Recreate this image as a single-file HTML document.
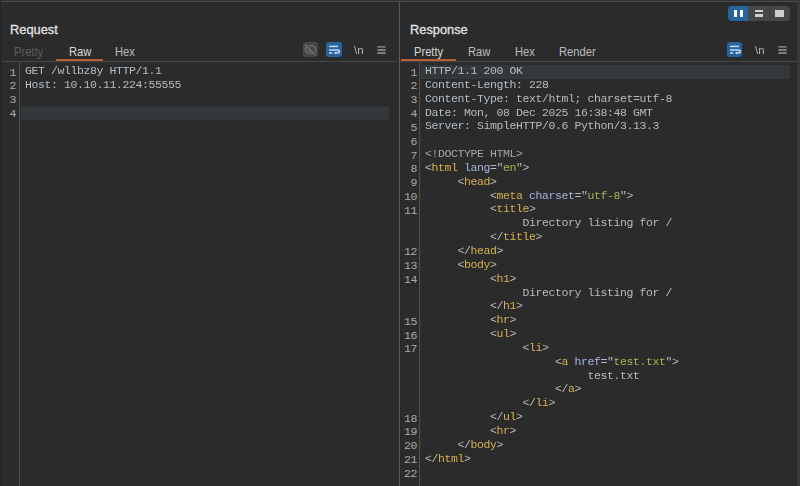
<!DOCTYPE html>
<html><head><meta charset="utf-8">
<style>
*{margin:0;padding:0;box-sizing:border-box}
html,body{width:800px;height:486px;overflow:hidden;background:#2b2b2b}
body{position:relative;font-family:"Liberation Sans",sans-serif}
.a{position:absolute}
.title{font-size:13.5px;color:#e2e2e2;-webkit-text-stroke:0.3px #e2e2e2;top:20.7px;line-height:18px;transform:scaleX(0.95);transform-origin:0 0}
.tab{font-size:12px;color:#bcbcbc;top:44px;line-height:16px;transform:scaleX(0.93);transform-origin:0 0}
.ul{height:2px;background:#b85c34;top:59px}
.code{will-change:transform;font-family:"Liberation Mono",monospace;font-size:11.5px;letter-spacing:-0.401px;color:#b2bec7;white-space:pre;line-height:13.84px}
.ln{font-family:"Liberation Mono",monospace;font-size:11.5px;letter-spacing:-0.401px;color:#a8a8a8;white-space:pre;line-height:13.84px;text-align:right}
.w{color:#bdb9b4}.t{color:#d6b050}.b{color:#bababa}.n{color:#a6b4e2}.v{color:#a0b650}.d{color:#9fa8a0}
</style></head><body>
<!-- top strip -->
<div class="a" style="left:0;top:0;width:800px;height:1px;background:#323438"></div>
<div class="a" style="left:0;top:1px;width:800px;height:1px;background:#4a4a4a"></div>
<div class="a" style="left:0;top:0;width:1px;height:486px;background:#20242e"></div>
<div class="a" style="left:1px;top:2px;width:1px;height:484px;background:#272a30"></div>
<!-- divider -->
<div class="a" style="left:398px;top:2px;width:1px;height:484px;background:#313131"></div>
<div class="a" style="left:399px;top:1px;width:1px;height:485px;background:#595959"></div>
<div class="a" style="left:400px;top:2px;width:1px;height:484px;background:#292929"></div>
<div class="a" style="left:797px;top:2px;width:1px;height:484px;background:#333436"></div>
<div class="a" style="left:798px;top:1px;width:1px;height:485px;background:#3d3e40"></div>
<div class="a" style="left:799px;top:0;width:1px;height:486px;background:#37383a"></div>

<!-- REQUEST -->
<div class="a title" style="left:10px">Request</div>
<div class="a tab" style="left:14px;color:#5c5c5c">Pretty</div>
<div class="a tab" style="left:69px;color:#d8d8d8">Raw</div>
<div class="a tab" style="left:115px">Hex</div>
<div class="a ul" style="left:56px;width:47px"></div>
<div class="a" style="left:2px;top:61px;width:395px;height:1px;background:#474747"></div>
<div class="a" style="left:19px;top:62px;width:1px;height:424px;background:#4e4e4e"></div><div class="a" style="left:20px;top:62px;width:1px;height:424px;background:#303030"></div>
<div class="a" style="left:21px;top:106px;width:368px;height:1px;background:#2f3134"></div><div class="a" style="left:21px;top:107px;width:368px;height:13px;background:#33383a"></div>
<div class="a ln" style="left:2px;top:65.5px;width:14px">1
2
3
4</div>
<div class="a code" style="left:24.6px;top:64.3px">GET /wllbz8y HTTP/1.1
Host: <span class="w">10.10.11.224:55555</span></div>

<!-- RESPONSE -->
<div class="a title" style="left:410px">Response</div>
<div class="a tab" style="left:414px;color:#d8d8d8">Pretty</div>
<div class="a tab" style="left:468px">Raw</div>
<div class="a tab" style="left:515px">Hex</div>
<div class="a tab" style="left:559px">Render</div>
<div class="a ul" style="left:401px;width:55px"></div>
<div class="a" style="left:400px;top:61px;width:398px;height:1px;background:#474747"></div>
<div class="a" style="left:419px;top:62px;width:1px;height:424px;background:#4e4e4e"></div><div class="a" style="left:420px;top:62px;width:1px;height:424px;background:#303030"></div>
<div class="a" style="left:421px;top:65px;width:369px;height:14px;background:#33383a"></div>
<div class="a ln" style="left:400px;top:65.5px;width:17px">1
2
3
4
5
6
7
8
9
10
11


12
13
14


15
16
17




18
19
20
21
22</div>
<div class="a code" style="left:424.6px;top:64.3px">HTTP/1.1 200 OK
Content-Length: <span class="w">228</span>
Content-Type: <span class="w">text/html; charset=utf-8</span>
Date: <span class="w">Mon, 08 Dec 2025 16:38:48 GMT</span>
Server: <span class="w">SimpleHTTP/0.6 Python/3.13.3</span>

<span class="d">&lt;!DOCTYPE HTML&gt;</span>
<span class="b">&lt;</span><span class="t">html</span> <span class="n">lang</span><span class="b">="</span><span class="v">en</span><span class="b">"&gt;</span>
     <span class="b">&lt;</span><span class="t">head</span><span class="b">&gt;</span>
          <span class="b">&lt;</span><span class="t">meta</span> <span class="n">charset</span><span class="b">="</span><span class="v">utf-8</span><span class="b">"&gt;</span>
          <span class="b">&lt;</span><span class="t">title</span><span class="b">&gt;</span>
               <span class="w">Directory listing for /</span>
          <span class="b">&lt;/</span><span class="t">title</span><span class="b">&gt;</span>
     <span class="b">&lt;/</span><span class="t">head</span><span class="b">&gt;</span>
     <span class="b">&lt;</span><span class="t">body</span><span class="b">&gt;</span>
          <span class="b">&lt;</span><span class="t">h1</span><span class="b">&gt;</span>
               <span class="w">Directory listing for /</span>
          <span class="b">&lt;/</span><span class="t">h1</span><span class="b">&gt;</span>
          <span class="b">&lt;</span><span class="t">hr</span><span class="b">&gt;</span>
          <span class="b">&lt;</span><span class="t">ul</span><span class="b">&gt;</span>
               <span class="b">&lt;</span><span class="t">li</span><span class="b">&gt;</span>
                    <span class="b">&lt;</span><span class="t">a</span> <span class="n">href</span><span class="b">="</span><span class="v">test.txt</span><span class="b">"&gt;</span>
                         <span class="w">test.txt</span>
                    <span class="b">&lt;/</span><span class="t">a</span><span class="b">&gt;</span>
               <span class="b">&lt;/</span><span class="t">li</span><span class="b">&gt;</span>
          <span class="b">&lt;/</span><span class="t">ul</span><span class="b">&gt;</span>
          <span class="b">&lt;</span><span class="t">hr</span><span class="b">&gt;</span>
     <span class="b">&lt;/</span><span class="t">body</span><span class="b">&gt;</span>
<span class="b">&lt;/</span><span class="t">html</span><span class="b">&gt;</span>
</div>

<!-- request toolbar icons -->
<div class="a" style="left:303px;top:42px;width:15px;height:15px;border-radius:3px;background:#474747"></div>
<svg class="a" style="left:303px;top:42px" width="15" height="15" viewBox="0 0 15 15">
<path d="M4.2 4.6 C2.8 5.6 2.2 6.8 2.2 7.6 C2.6 9.6 5 11.4 7.6 11.4 C8.6 11.4 9.5 11.1 10.2 10.7 M6 3.9 C6.5 3.8 7 3.7 7.6 3.7 C10.4 3.7 12.8 5.6 13 7.6 C12.9 8.4 12.5 9.2 11.8 9.9" fill="none" stroke="#6f6f6f" stroke-width="1.3"/>
<path d="M1.8 2.2 L12.8 13.2" stroke="#6f6f6f" stroke-width="1.3"/>
<path d="M5.6 5.9 A2.6 2.6 0 0 0 9.2 9.5" fill="none" stroke="#6a6a6a" stroke-width="1.1"/>
</svg>
<div class="a" style="left:326px;top:42px;width:16px;height:15px;border-radius:3px;background:#27639c"></div>
<svg class="a" style="left:326px;top:42px" width="16" height="15" viewBox="0 0 16 15">
<path d="M3 4.4 H12" stroke="#c9d9ec" stroke-width="1.5"/>
<path d="M3 7.9 H11.2 C12.6 7.9 13.3 8.6 13.3 9.5 C13.3 10.4 12.6 11 11.2 11 H9" fill="none" stroke="#c9d9ec" stroke-width="1.5"/>
<path d="M3 11 H6.3" stroke="#c9d9ec" stroke-width="1.5"/>
<path d="M8 11 L10 9.4 L10 12.6 Z" fill="#c9d9ec"/>
</svg>
<div class="a" style="left:353.5px;top:42.7px;font-family:'Liberation Sans',sans-serif;font-size:11.5px;line-height:14px;color:#b4b4b4;will-change:transform">\n</div>
<svg class="a" style="left:377px;top:46px" width="9" height="8" viewBox="0 0 9 8">
<path d="M0.4 0.9 H8.6 M0.4 4 H8.6 M0.4 7 H8.6" stroke="#9a9a9a" stroke-width="1.4"/>
</svg>

<!-- response toolbar icons -->
<div class="a" style="left:727px;top:42px;width:15px;height:15px;border-radius:3px;background:#27639c"></div>
<svg class="a" style="left:726.5px;top:42px" width="16" height="15" viewBox="0 0 16 15">
<path d="M3 4.4 H12" stroke="#c9d9ec" stroke-width="1.5"/>
<path d="M3 7.9 H11.2 C12.6 7.9 13.3 8.6 13.3 9.5 C13.3 10.4 12.6 11 11.2 11 H9" fill="none" stroke="#c9d9ec" stroke-width="1.5"/>
<path d="M3 11 H6.3" stroke="#c9d9ec" stroke-width="1.5"/>
<path d="M8 11 L10 9.4 L10 12.6 Z" fill="#c9d9ec"/>
</svg>
<div class="a" style="left:754.5px;top:42.7px;font-family:'Liberation Sans',sans-serif;font-size:11.5px;line-height:14px;color:#b4b4b4;will-change:transform">\n</div>
<svg class="a" style="left:777.5px;top:46px" width="9" height="8" viewBox="0 0 9 8">
<path d="M0.4 0.9 H8.6 M0.4 4 H8.6 M0.4 7 H8.6" stroke="#9a9a9a" stroke-width="1.4"/>
</svg>

<!-- layout button group -->
<div class="a" style="left:728px;top:5.7px;width:62px;height:15.3px;border-radius:4px;background:#474749;overflow:hidden">
  <div class="a" style="left:0;top:0;width:20px;height:16px;background:#27639c"></div>
  <div class="a" style="left:40.5px;top:0;width:1px;height:16px;background:#3d3d3f"></div>
</div>
<div class="a" style="left:734px;top:10px;width:3px;height:7px;background:#fff"></div>
<div class="a" style="left:739.6px;top:10px;width:3px;height:7px;background:#fff"></div>
<div class="a" style="left:755px;top:10px;width:8px;height:2px;background:#d0d0d0"></div>
<div class="a" style="left:755px;top:14px;width:8px;height:3px;background:#d0d0d0"></div>
<div class="a" style="left:775px;top:10px;width:9px;height:7px;background:#d0d0d0"></div>
</body></html>
